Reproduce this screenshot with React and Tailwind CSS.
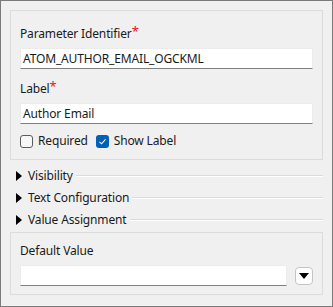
import React from "react";

function TextBox({ value, className = "" }) {
  return (
    <div
      className={`h-[21px] bg-white border border-[#ececec] border-b-[#7f7f7f] pl-[2px] flex items-center text-[12px] text-[#1a1a1a] ${className}`}
    >
      {value}
    </div>
  );
}

function FieldLabel({ text, required }) {
  return (
    <div className="h-[16px] flex items-center text-[12px] text-[#1a1a1a]">
      {text}
      {required && <span className="text-[#e81123] text-[13px] leading-none -mt-[5px]">*</span>}
    </div>
  );
}

function Section({ title }) {
  return (
    <div className="h-[22px] flex items-center">
      <svg width="6" height="10" viewBox="0 0 6 10" className="ml-[6px] mr-[6px]">
        <path d="M0 0 L6 5 L0 10 Z" fill="#000" />
      </svg>
      <span className="text-[12px] text-[#1a1a1a]">{title}</span>
      <div className="flex-1 ml-[3px] h-[2px] border-t border-[#dcdcdc] border-b border-b-white" />
    </div>
  );
}

export default function App() {
  return (
    <div
      className="w-[333px] h-[307px] bg-[#f0f0f0] border border-[#7a7a7a] px-[9px] pt-[9px] select-none tracking-[-0.15px]"
      style={{ fontFamily: '"Noto Sans", "Open Sans", sans-serif' }}
    >
      {/* Main panel */}
      <div className="h-[150px] border border-[#dcdcdc] px-[9px] pt-[15px]">
        <FieldLabel text="Parameter Identifier" required />
        <TextBox value="ATOM_AUTHOR_EMAIL_OGCKML" className="mt-[6px]" />
        <div className="mt-[12px]">
          <FieldLabel text="Label" required />
        </div>
        <TextBox value="Author Email" className="mt-[6px]" />
        <div className="mt-[10px] flex items-center h-[14px] text-[12px] text-[#1a1a1a]">
          <span className="w-[13px] h-[13px] rounded-[3px] border border-[#5c5c5c] bg-[#f7f7f7]" />
          <span className="ml-[5px]">Required</span>
          <span className="ml-[8px] w-[13px] h-[13px] rounded-[3px] bg-[#005fb8] flex items-center justify-center">
            <svg width="9" height="9" viewBox="0 0 9 9">
              <path d="M1.5 4.8 L3.6 6.8 L7.5 2.4" stroke="#fff" strokeWidth="1.1" fill="none" />
            </svg>
          </span>
          <span className="ml-[5px]">Show Label</span>
        </div>
      </div>

      {/* Collapsible sections */}
      <div className="pt-[5px]">
        <Section title="Visibility" />
        <Section title="Text Configuration" />
        <Section title="Value Assignment" />
      </div>

      {/* Default value panel */}
      <div className="mt-[1px] h-[63px] border border-[#dcdcdc] pl-[9px] pr-[9px] pt-[10px]">
        <FieldLabel text="Default Value" />
        <div className="mt-[6px] flex items-center">
          <TextBox value="" className="flex-1" />
          <button className="ml-[8px] w-[18px] h-[18px] rounded-[4px] border border-[#c4c4c4] bg-white flex items-center justify-center">
            <svg width="10" height="6" viewBox="0 0 10 6">
              <path d="M0 0 L10 0 L5 6 Z" fill="#000" />
            </svg>
          </button>
        </div>
      </div>
    </div>
  );
}
